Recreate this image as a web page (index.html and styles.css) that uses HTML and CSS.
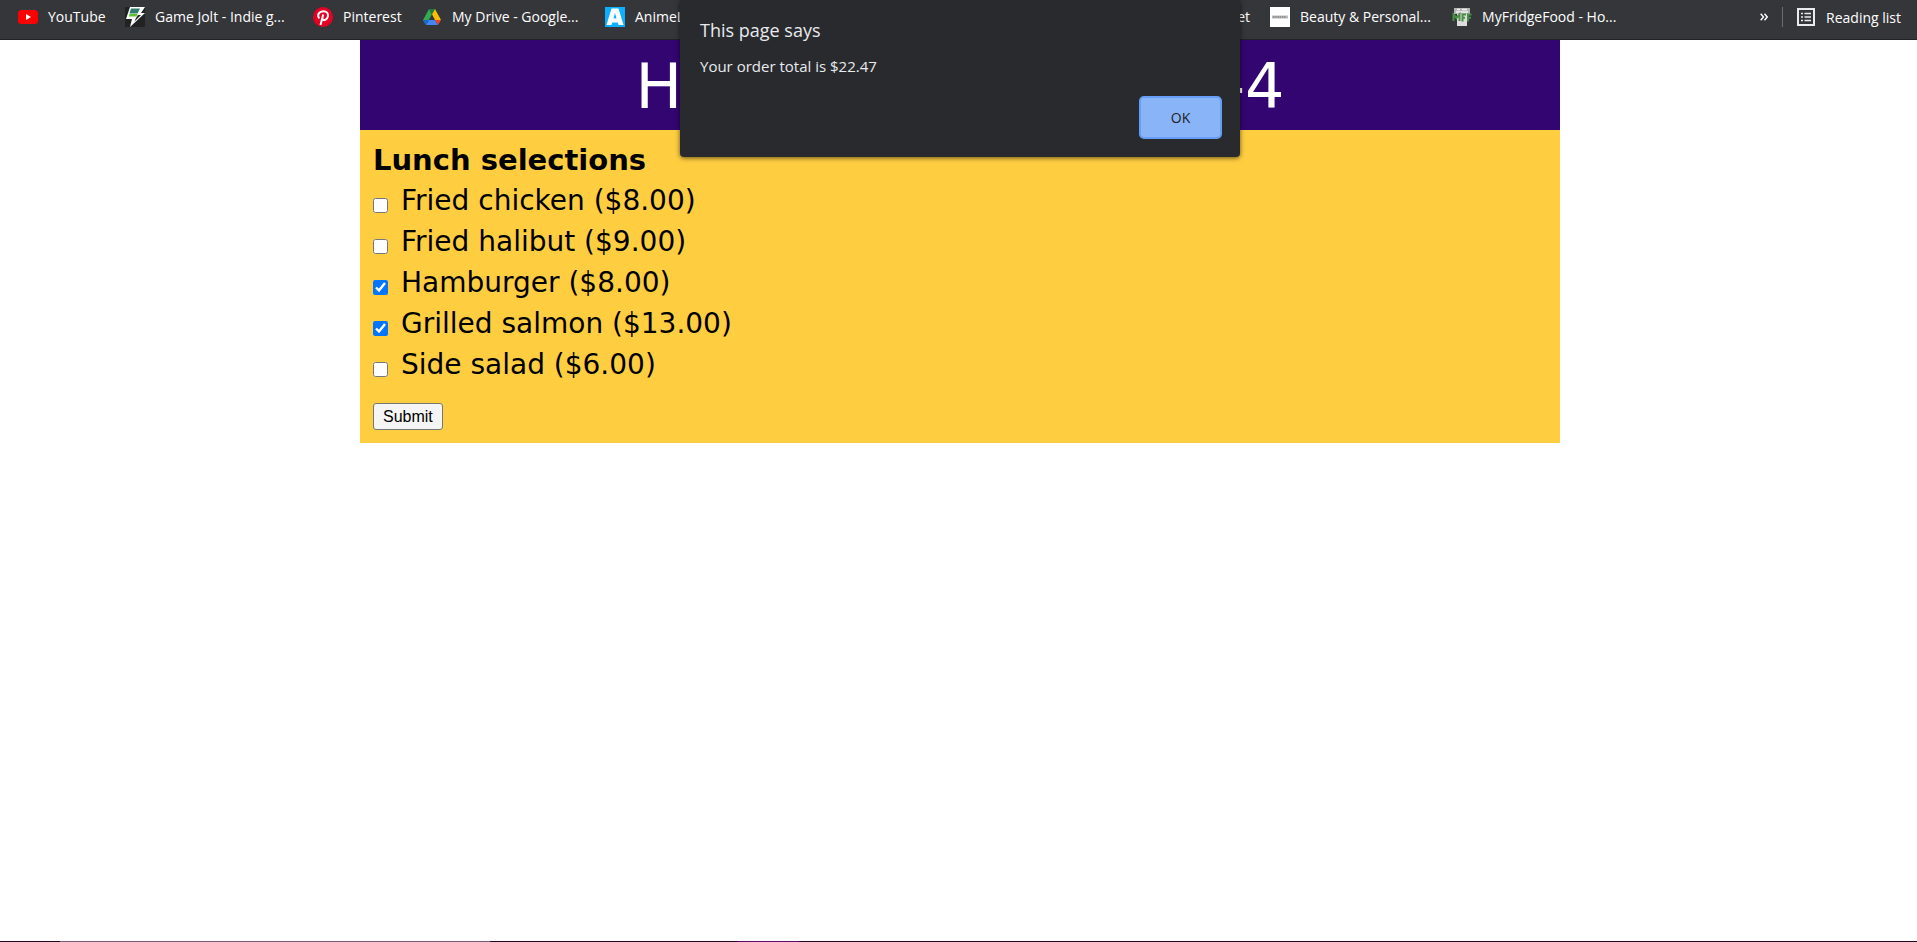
FILE: index.html
```html
<!DOCTYPE html>
<html lang="en">
<head>
<meta charset="utf-8">
<title>Hands-on Project 3-4</title>
<link rel="stylesheet" href="styles.css">
</head>
<body>
<nav class="bookmarks" aria-label="Bookmarks">
  <div class="bookmarks-start">
    <a class="bookmark" href="#"><svg class="icon" viewBox="0 0 20 20"><rect y="3" width="20" height="14" rx="3.5" fill="#f00"/><path d="M8 7l5 3-5 3z" fill="#fff"/></svg>YouTube</a>
    <a class="bookmark" href="#"><svg class="icon" viewBox="0 0 20 20"><rect width="20" height="20" fill="#222"/><path d="M5 0h15l-4 6h4L5 20l2-8H1z" fill="#fff"/><path d="M6 1.500h9l-2.500 5H4.500z" fill="#2f7f6f"/><path d="M4.500 7h8l-1 2.500H4z" fill="#5cc42a"/><path d="M13 8h3l-6.500 6.500L11 11z" fill="#222"/></svg>Game Jolt - Indie g...</a>
    <a class="bookmark" href="#"><svg class="icon" viewBox="0 0 20 20"><circle cx="10" cy="10" r="10" fill="#e60023"/><path d="M6.200 11.500C3.500 7.500 6.500 4.200 10.300 4.200c3.500 0 5.200 2.300 4.600 5.200-.6 3-3.800 4.700-5.400 2.800M10.200 7.500L7.500 18" fill="none" stroke="#fff" stroke-width="2"/></svg>Pinterest</a>
    <a class="bookmark" href="#"><svg class="icon" viewBox="0 0 20 20"><path d="M7 2l3 5.200L4 18l-3-5z" fill="#34a853"/><path d="M7 2h6l-3 5.200z" fill="#188038"/><path d="M13 2l6 11h-6L10 7.200z" fill="#fbbc04"/><path d="M7 13h6l3 5H4z" fill="#4285f4"/><path d="M13 13h6l-3 5z" fill="#ea4335"/><path d="M1 13h6l-3 5z" fill="#1967d2"/></svg>My Drive - Google...</a>
    <a class="bookmark" href="#"><svg class="icon" viewBox="0 0 20 20"><rect width="20" height="20" fill="#0ab0ff"/><path fill-rule="evenodd" d="M6.500 1.500h7l5 16.500h-5l-.8-2.500H7.300l-.8 2.500h-5zM10 6l-1.500 5.500h3z" fill="#fff"/></svg>AnimeLab</a>
  </div>
  <div class="bookmarks-end">
    <a class="bookmark" href="#">Planet</a>
    <a class="bookmark beauty" href="#"><svg class="icon" viewBox="0 0 20 20"><rect width="20" height="20" fill="#fff"/><path d="M2 10h16" stroke="#bbb" stroke-width="3"/><path d="M3 10h13" stroke="#888" stroke-width="1.500" stroke-dasharray="1.500 .7"/></svg>Beauty &amp; Personal...</a>
    <a class="bookmark fridge" href="#"><svg class="icon" viewBox="0 0 20 20"><path d="M2 1h16v6H2z" fill="#b5b5b5"/><path d="M5 2.500h3M10 2.500h5M4 5h12" stroke="#f2f2f2" stroke-width="1.500"/><path d="M5 7h10v12H5z" fill="#ddd"/><path d="M1.500 14V7.500L4.500 11l3-3.500V14M10.500 14.500V7.500H14M10.500 10.700H13M19.500 7.500H16v7M16 10.700h3" fill="none" stroke="#4a8d45" stroke-width="2"/></svg>MyFridgeFood - Ho...</a>
    <button class="more" type="button" aria-label="More bookmarks"><svg class="more-icon" viewBox="0 0 8 8"><path d="M.7.7L3.500 4 .7 7.300M4.500.7L7.300 4 4.500 7.300" fill="none" stroke="#fff" stroke-width="1.400"/></svg></button>
    <button class="reading" type="button"><svg class="reading-icon" viewBox="0 0 18 18"><path d="M1 1h16v16H1z" fill="none" stroke="#e8eaed" stroke-width="2"/><path d="M4 5.500h2M4 9h2M4 12.500h2M7.500 5.500H14M7.500 9H14M7.500 12.500H14" stroke="#e8eaed" stroke-width="1.600"/></svg>Reading list</button>
  </div>
</nav>
<main class="page">
  <div class="container">
    <h1 class="title">Hands-on Project 3-4</h1>
    <form class="order">
      <h2 class="subtitle">Lunch selections</h2>
      <label class="item"><input class="check" type="checkbox">Fried chicken ($8.00)</label>
      <label class="item"><input class="check" type="checkbox">Fried halibut ($9.00)</label>
      <label class="item"><input class="check" type="checkbox" checked>Hamburger ($8.00)</label>
      <label class="item"><input class="check" type="checkbox" checked>Grilled salmon ($13.00)</label>
      <label class="item"><input class="check" type="checkbox">Side salad ($6.00)</label>
      <button class="submit" type="button">Submit</button>
    </form>
  </div>
</main>
<section class="dialog" role="alertdialog" aria-labelledby="dialog-title" aria-describedby="dialog-text">
  <h2 class="dialog-title" id="dialog-title">This page says</h2>
  <p class="dialog-text" id="dialog-text">Your order total is $22.47</p>
  <button class="ok" type="button">OK</button>
</section>
<footer class="taskbar"><span class="task-search"></span><span class="task-active"></span></footer>
</body>
</html>
```
FILE: styles.css
```css
* { box-sizing: border-box; }
body {
  margin: 0;
  min-height: 100vh;
  display: flex;
  flex-direction: column;
  background: #fff;
  font-family: "Open Sans", "Noto Sans", sans-serif;
}
h1, h2, p { margin: 0; font-weight: 400; }
button { font-family: inherit; }

.bookmarks {
  height: 40px;
  padding: 0 16px 5px 18px;
  display: flex;
  justify-content: space-between;
  align-items: center;
  background: #35363a;
  border-bottom: 1px solid #222326;
  color: #fff;
  font-size: 14px;
}
.bookmarks-start {
  display: grid;
  grid-template-columns: 107px 188px 109px 183px 120px;
}
.bookmarks-end { display: flex; align-items: center; }
.bookmark {
  display: flex;
  align-items: center;
  gap: 10px;
  color: inherit;
  line-height: 20px;
  text-decoration: none;
  white-space: nowrap;
}
.icon { width: 20px; height: 20px; flex: none; }
.beauty { width: 182px; margin-left: 20px; }
.fridge { width: 308px; }
.more, .reading {
  display: flex;
  align-items: center;
  padding: 0;
  border: 0;
  background: none;
  color: inherit;
  font-size: 14px;
}
.more-icon { width: 8px; height: 8px; }
.reading {
  height: 20px;
  gap: 11px;
  margin-left: 14px;
  padding-left: 14px;
  border-left: 1px solid #6b6c6f;
}
.reading-icon { width: 18px; height: 18px; }

.page { flex: 1; padding-left: 3px; }
.container {
  max-width: 1200px;
  margin: 0 auto;
  font-family: Verdana, "DejaVu Sans", sans-serif;
}
.title {
  padding-top: 4px;
  background: #330570;
  color: #fff;
  font-size: 62px;
  line-height: 86px;
  text-align: center;
}
.order {
  display: flex;
  flex-direction: column;
  align-items: flex-start;
  padding: 10px 13px 13px;
  background: #ffce40;
  color: #000;
  font-size: 28px;
}
.subtitle { font-size: 29px; font-weight: 700; line-height: 40px; }
.item { display: flex; align-items: center; gap: 13px; line-height: 41px; }
.check { width: 15px; height: 15px; margin: 10px 0 0; }
.submit {
  height: 27px;
  margin-top: 18px;
  padding: 0 9px;
  border: 1px solid #767676;
  border-radius: 3px;
  background: #f5f5f5;
  font-family: "Liberation Sans", Arial, sans-serif;
  font-size: 16px;
}

.dialog {
  position: absolute;
  top: 0;
  left: 3px;
  right: 0;
  width: 560px;
  margin: 0 auto;
  padding: 17px 18px 18px 20px;
  display: flex;
  flex-direction: column;
  border-radius: 0 0 4px 4px;
  background: #292a2d;
  box-shadow: 0 1px 5px rgba(0, 0, 0, .6);
  color: #e8eaed;
}
.dialog-title { font-size: 18px; line-height: 26px; }
.dialog-text { margin-top: 10px; font-size: 15px; line-height: 26px; }
.ok {
  align-self: flex-end;
  width: 83px;
  height: 43px;
  margin-top: 17px;
  border: 2px solid #669df6;
  border-radius: 5px;
  background: #8ab4f8;
  color: #202124;
  font-size: 14px;
  font-weight: 500;
}

.taskbar {
  height: 1px;
  display: grid;
  grid-template-columns: 430px 61px;
  column-gap: 248px;
  padding-left: 60px;
  background: #210726;
}
.task-search { background: #7d5b78; }
.task-active { background: #5c0a68; }
```
